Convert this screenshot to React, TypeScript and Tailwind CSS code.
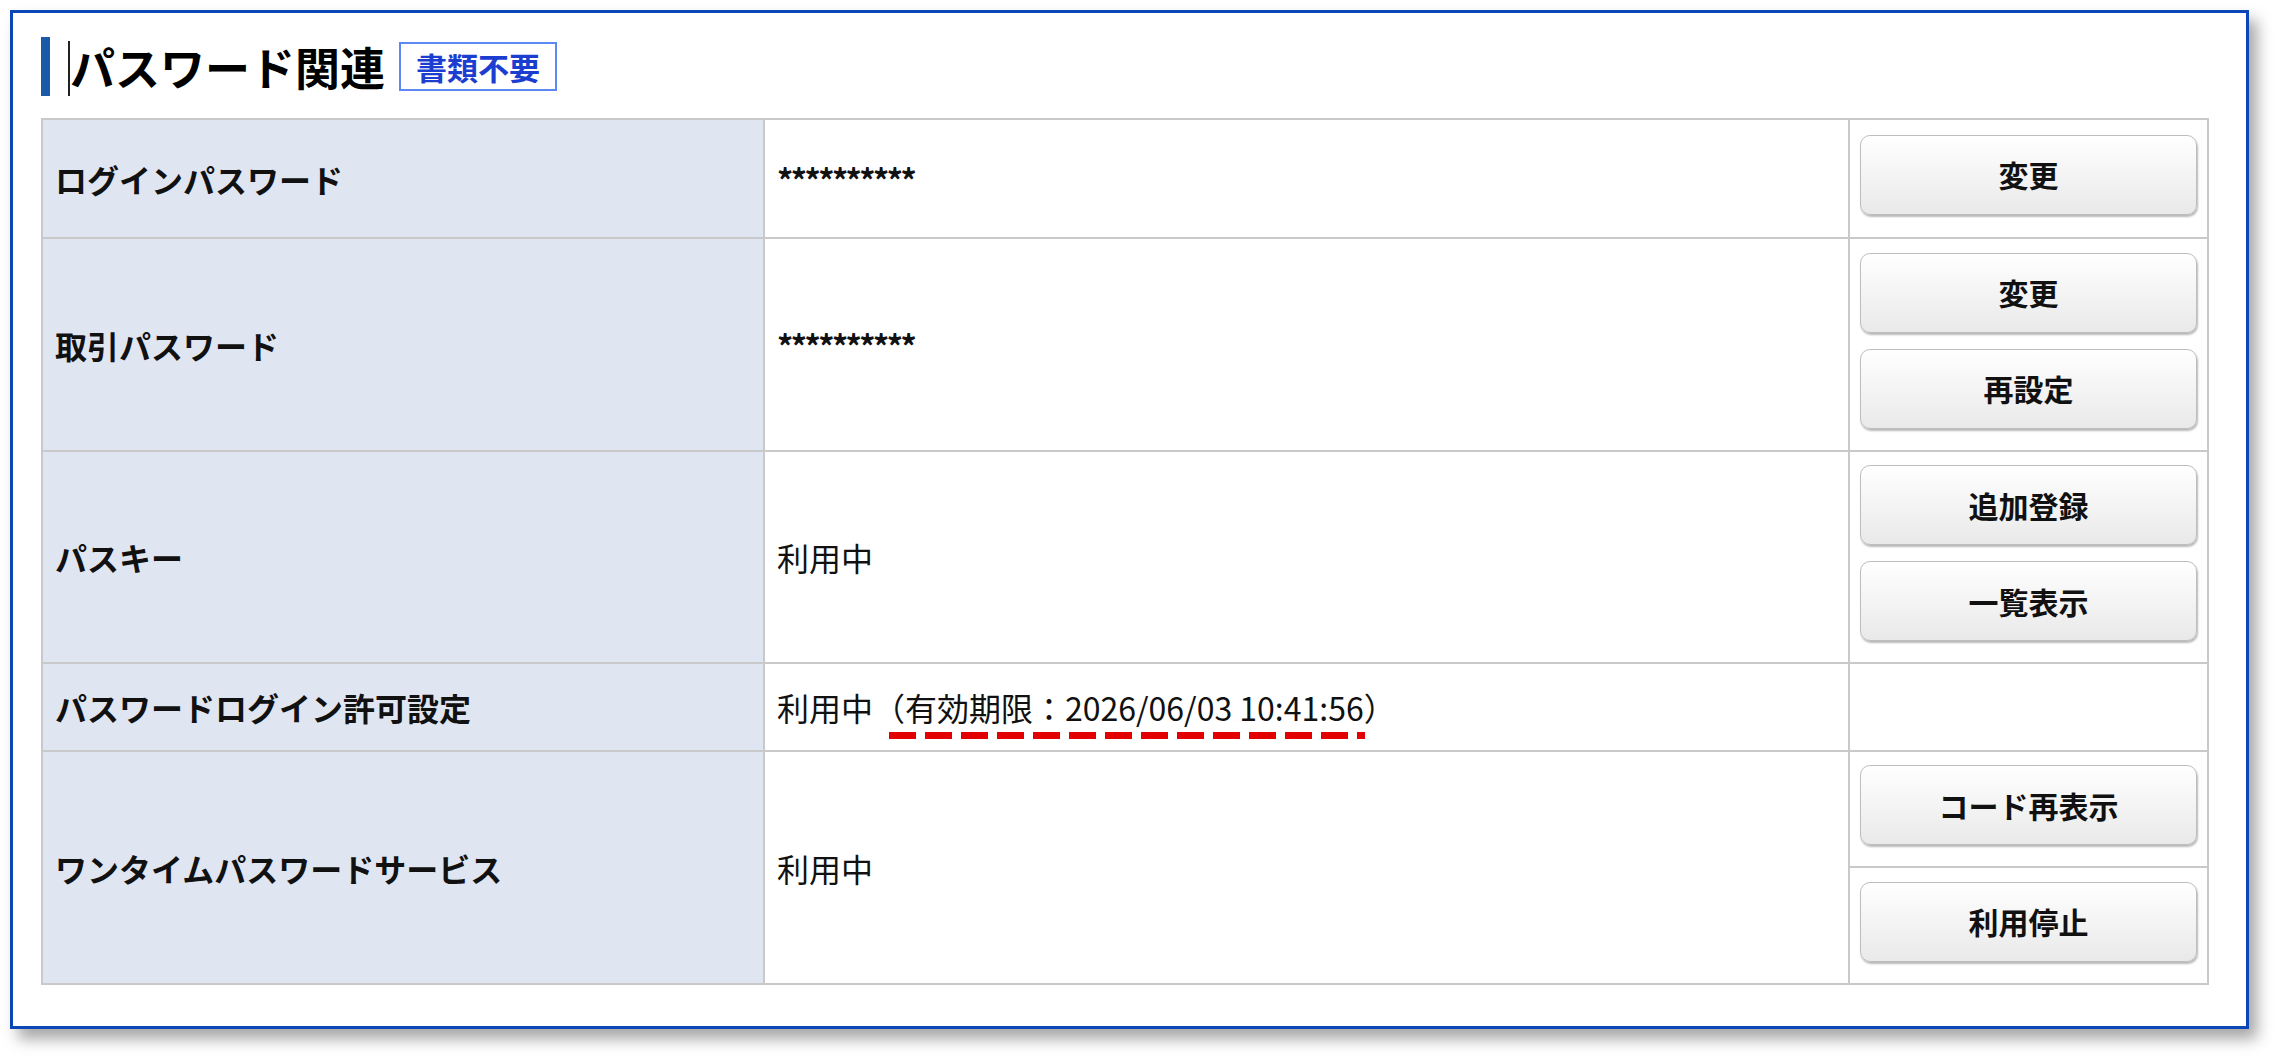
import React from "react";

type Row = {
  label: string;
  value: React.ReactNode;
  actions: string[];
};

const font = { fontFamily: '"Noto Sans CJK JP", "Noto Sans", sans-serif' };

const ActionButton = ({ children }: { children: React.ReactNode }) => (
  <button
    type="button"
    className="w-full h-[80px] shrink-0 rounded-[10px] border-[1.5px] border-[#bdbdbd] bg-gradient-to-b from-[#ffffff] to-[#e9e9e9] text-[30px] font-bold text-[#111] shadow-[1px_2px_2px_rgba(0,0,0,0.28)]"
  >
    {children}
  </button>
);

const LabelCell = ({ children, className = "" }: { children: React.ReactNode; className?: string }) => (
  <div className={`bg-[#dfe6f2] flex items-center pl-[12px] text-[32px] font-bold text-[#111] ${className}`}>
    {children}
  </div>
);

const ValueCell = ({ children, className = "" }: { children: React.ReactNode; className?: string }) => (
  <div className={`bg-white flex items-center pl-[12px] text-[32px] text-[#111] ${className}`}>{children}</div>
);

const ActionCell = ({ actions }: { actions: string[] }) => (
  <div className="bg-white flex flex-col justify-center gap-[16px] px-[10px] pb-[8px]">
    {actions.map((a) => (
      <ActionButton key={a}>{a}</ActionButton>
    ))}
  </div>
);

const ExpiryNote = () => (
  <span className="relative">
    （有効期限：2026/06/03 10:41:56）
    <svg className="absolute left-[16px] top-full mt-[2px]" width="476" height="7" viewBox="0 0 476 7">
      <line x1="0" y1="3.5" x2="476" y2="3.5" stroke="#e20000" strokeWidth="7" strokeDasharray="27 9" />
    </svg>
  </span>
);

const Masked = () => <span className="font-bold tracking-[-2.5px]">**********</span>;

const rows: Row[] = [
  { label: "ログインパスワード", value: <Masked />, actions: ["変更"] },
  { label: "取引パスワード", value: <Masked />, actions: ["変更", "再設定"] },
  { label: "パスキー", value: "利用中", actions: ["追加登録", "一覧表示"] },
  {
    label: "パスワードログイン許可設定",
    value: (
      <span>
        利用中
        <ExpiryNote />
      </span>
    ),
    actions: [],
  },
];

export default function App() {
  return (
    <div className="min-h-screen bg-white pl-[10px] pt-[10px]" style={font}>
      <section className="w-[2239px] h-[1019px] border-[3px] border-[#0b47b6] bg-white px-[28px] pt-[24px] shadow-[8px_10px_14px_rgba(0,0,0,0.35)]">
        <div className="flex items-center h-[59px]">
          <span className="w-[9px] h-[59px] bg-[#1a5aa9]" />
          <span className="ml-[18px] w-[2px] h-[55px] self-end bg-[#222]" />
          <h2 className="text-[45px] font-bold leading-none text-black">パスワード関連</h2>
          <span className="ml-[14px] h-[49px] px-[15px] flex items-center border-2 border-[#5c88f4] text-[31px] font-bold leading-none text-[#1b3ed0]">
            書類不要
          </span>
        </div>

        <div className="mt-[22px] grid w-[2168px] grid-cols-[720px_1083px_357px] grid-rows-[117px_211px_210px_86px_114px_115px] gap-[2px] p-[2px] bg-[#c9c9c9]">
          {rows.map((r) => (
            <React.Fragment key={r.label}>
              <LabelCell>{r.label}</LabelCell>
              <ValueCell>{r.value}</ValueCell>
              <ActionCell actions={r.actions} />
            </React.Fragment>
          ))}
          <LabelCell className="row-span-2">ワンタイムパスワードサービス</LabelCell>
          <ValueCell className="row-span-2">利用中</ValueCell>
          <ActionCell actions={["コード再表示"]} />
          <ActionCell actions={["利用停止"]} />
        </div>
      </section>
    </div>
  );
}
